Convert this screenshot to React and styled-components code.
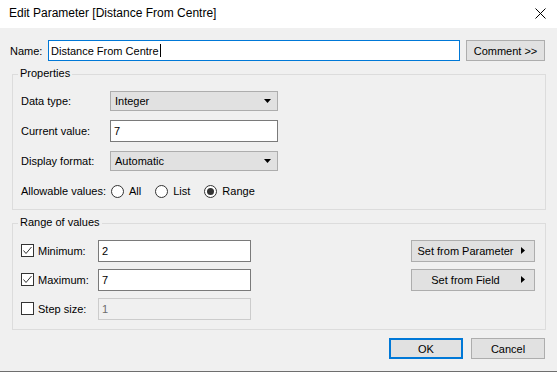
import React from "react"
import styled, { createGlobalStyle } from "styled-components"

const GlobalStyle = createGlobalStyle`
  html, body {
    margin: 0;
    padding: 0;
  }
  body {
    font-family: "Liberation Sans", Arial, sans-serif;
    font-size: 11px;
    color: #000;
  }
  * {
    box-sizing: border-box;
  }
`

const Window = styled.div`
  width: 557px;
  height: 372px;
  display: flex;
  flex-direction: column;
  overflow: hidden;
  background: #f0f0f0;
  border-bottom: 1px solid #6e6e6e;
`

const TitleBar = styled.div`
  flex: none;
  height: 28px;
  display: flex;
  align-items: center;
  justify-content: space-between;
  padding: 0 11px 2px 9px;
  background: #fff;
  font-size: 12px;
`

const Body = styled.div`
  flex: 1;
  display: flex;
  flex-direction: column;
  padding: 12px 11px 0 10px;
`

const NameRow = styled.div`
  display: flex;
  align-items: center;
  height: 21px;
  margin-right: 1px;
`

const NameLabel = styled.label`
  width: 38px;
`

const TextBox = styled.div`
  display: flex;
  align-items: center;
  width: ${p => p.$width}px;
  height: ${p => p.$height || 22}px;
  padding: 0 ${p => (p.$focused ? 2 : 3)}px;
  background: ${p => (p.$disabled ? "#f0f0f0" : "#fff")};
  border: 1px solid ${p => (p.$focused ? "#0078d7" : p.$disabled ? "#cccccc" : "#7a7a7a")};
  color: ${p => (p.$disabled ? "#6d6d6d" : "#000")};
`

const Caret = styled.span`
  display: inline-block;
  width: 1px;
  height: 13px;
  margin-left: 1px;
  background: #000;
`

const Button = styled.div`
  display: flex;
  align-items: center;
  justify-content: center;
  width: ${p => p.$width}px;
  height: ${p => p.$height || 21}px;
  margin-left: ${p => (p.$push ? "auto" : "0")};
  background: #e1e1e1;
  border: ${p => (p.$default ? "2px solid #0078d7" : "1px solid #adadad")};
`

const Group = styled.div`
  position: relative;
  margin: ${p => p.$top}px 0 0 2px;
  padding: ${p => p.$pad};
  border: 1px solid #dcdcdc;
`

const GroupTitle = styled.span`
  position: absolute;
  top: -8px;
  left: 5px;
  padding: 0 2px;
  background: #f0f0f0;
`

const PropGrid = styled.div`
  display: grid;
  grid-template-columns: 89px 168px;
  grid-auto-rows: 30px;
  align-items: center;
`

const Select = styled.div`
  display: flex;
  align-items: center;
  justify-content: space-between;
  height: 20px;
  padding: 0 6px 0 4px;
  background: #e1e1e1;
  border: 1px solid #adadad;
`

const RadioGroup = styled.div`
  display: flex;
  align-items: center;
  gap: 14px;
  margin-left: 1px;
`

const RadioOption = styled.div`
  display: flex;
  align-items: center;
  gap: 5px;
`

const RadioCircle = styled.span`
  display: flex;
  align-items: center;
  justify-content: center;
  width: 13px;
  height: 13px;
  border-radius: 50%;
  border: 1px solid #333;
  background: #fff;

  &::after {
    content: "";
    display: ${p => (p.$checked ? "block" : "none")};
    width: 7px;
    height: 7px;
    border-radius: 50%;
    background: #333;
  }
`

const RangeRow = styled.div`
  display: flex;
  align-items: center;
  height: 29px;
`

const CheckBox = styled.span`
  display: flex;
  flex: none;
  width: 13px;
  height: 13px;
  border: 1px solid #333;
  background: #fff;
`

const RangeLabel = styled.span`
  width: 60px;
  margin-left: 4px;
`

const MenuLabel = styled.span`
  flex: 1;
  text-align: center;
`

const MenuButton = styled(Button)`
  justify-content: space-between;
  padding: 0 9px 0 4px;
  gap: 6px;
`

const Footer = styled.div`
  display: flex;
  justify-content: flex-end;
  gap: 8px;
  margin: 8px 1px 0 0;
`

const Arrow = ({ dir }) =>
  dir === "down" ? (
    <svg width="7" height="4" viewBox="0 0 7 4">
      <path d="M0 0H7L3.5 4Z" fill="#000" />
    </svg>
  ) : (
    <svg width="4" height="7" viewBox="0 0 4 7">
      <path d="M0 0V7L4 3.5Z" fill="#000" />
    </svg>
  )

const Check = ({ checked }) => (
  <CheckBox>
    {checked && (
      <svg width="11" height="11" viewBox="0 0 11 11">
        <polyline points="1.5,5.5 4,8.5 9.5,2" fill="none" stroke="#333" strokeWidth="1" />
      </svg>
    )}
  </CheckBox>
)

const Radio = ({ label, checked }) => (
  <RadioOption>
    <RadioCircle $checked={checked} />
    <span>{label}</span>
  </RadioOption>
)

const CloseIcon = () => (
  <svg width="11" height="11" viewBox="0 0 11 11">
    <path d="M0.5 0.5L10.5 10.5M10.5 0.5L0.5 10.5" stroke="#000" strokeWidth="1" />
  </svg>
)

const rangeRows = [
  { label: "Minimum:", value: "2", checked: true, action: "Set from Parameter" },
  { label: "Maximum:", value: "7", checked: true, action: "Set from Field" },
  { label: "Step size:", value: "1", checked: false, disabled: true },
]

export default function App() {
  return (
    <>
      <GlobalStyle />
      <Window>
        <TitleBar>
          <span>Edit Parameter [Distance From Centre]</span>
          <CloseIcon />
        </TitleBar>

        <Body>
          <NameRow>
            <NameLabel>Name:</NameLabel>
            <TextBox $width={412} $height={21} $focused>
              Distance From Centre<Caret />
            </TextBox>
            <Button $width={79} $push>Comment &gt;&gt;</Button>
          </NameRow>

          <Group $top={13} $pad="11px 0 3px 8px">
            <GroupTitle>Properties</GroupTitle>
            <PropGrid>
              <span>Data type:</span>
              <Select>
                Integer <Arrow dir="down" />
              </Select>

              <span>Current value:</span>
              <TextBox $width={168}>7</TextBox>

              <span>Display format:</span>
              <Select>
                Automatic <Arrow dir="down" />
              </Select>

              <span>Allowable values:</span>
              <RadioGroup>
                <Radio label="All" />
                <Radio label="List" />
                <Radio label="Range" checked />
              </RadioGroup>
            </PropGrid>
          </Group>

          <Group $top={13} $pad="12px 10px 6px 8px">
            <GroupTitle>Range of values</GroupTitle>
            {rangeRows.map(row => (
              <RangeRow key={row.label}>
                <Check checked={row.checked} />
                <RangeLabel>{row.label}</RangeLabel>
                <TextBox $width={153} $disabled={row.disabled}>
                  {row.value}
                </TextBox>
                {row.action && (
                  <MenuButton $width={124} $height={22} $push>
                    <MenuLabel>{row.action}</MenuLabel>
                    <Arrow dir="right" />
                  </MenuButton>
                )}
              </RangeRow>
            ))}
          </Group>

          <Footer>
            <Button $width={74} $default>OK</Button>
            <Button $width={74}>Cancel</Button>
          </Footer>
        </Body>
      </Window>
    </>
  )
}
